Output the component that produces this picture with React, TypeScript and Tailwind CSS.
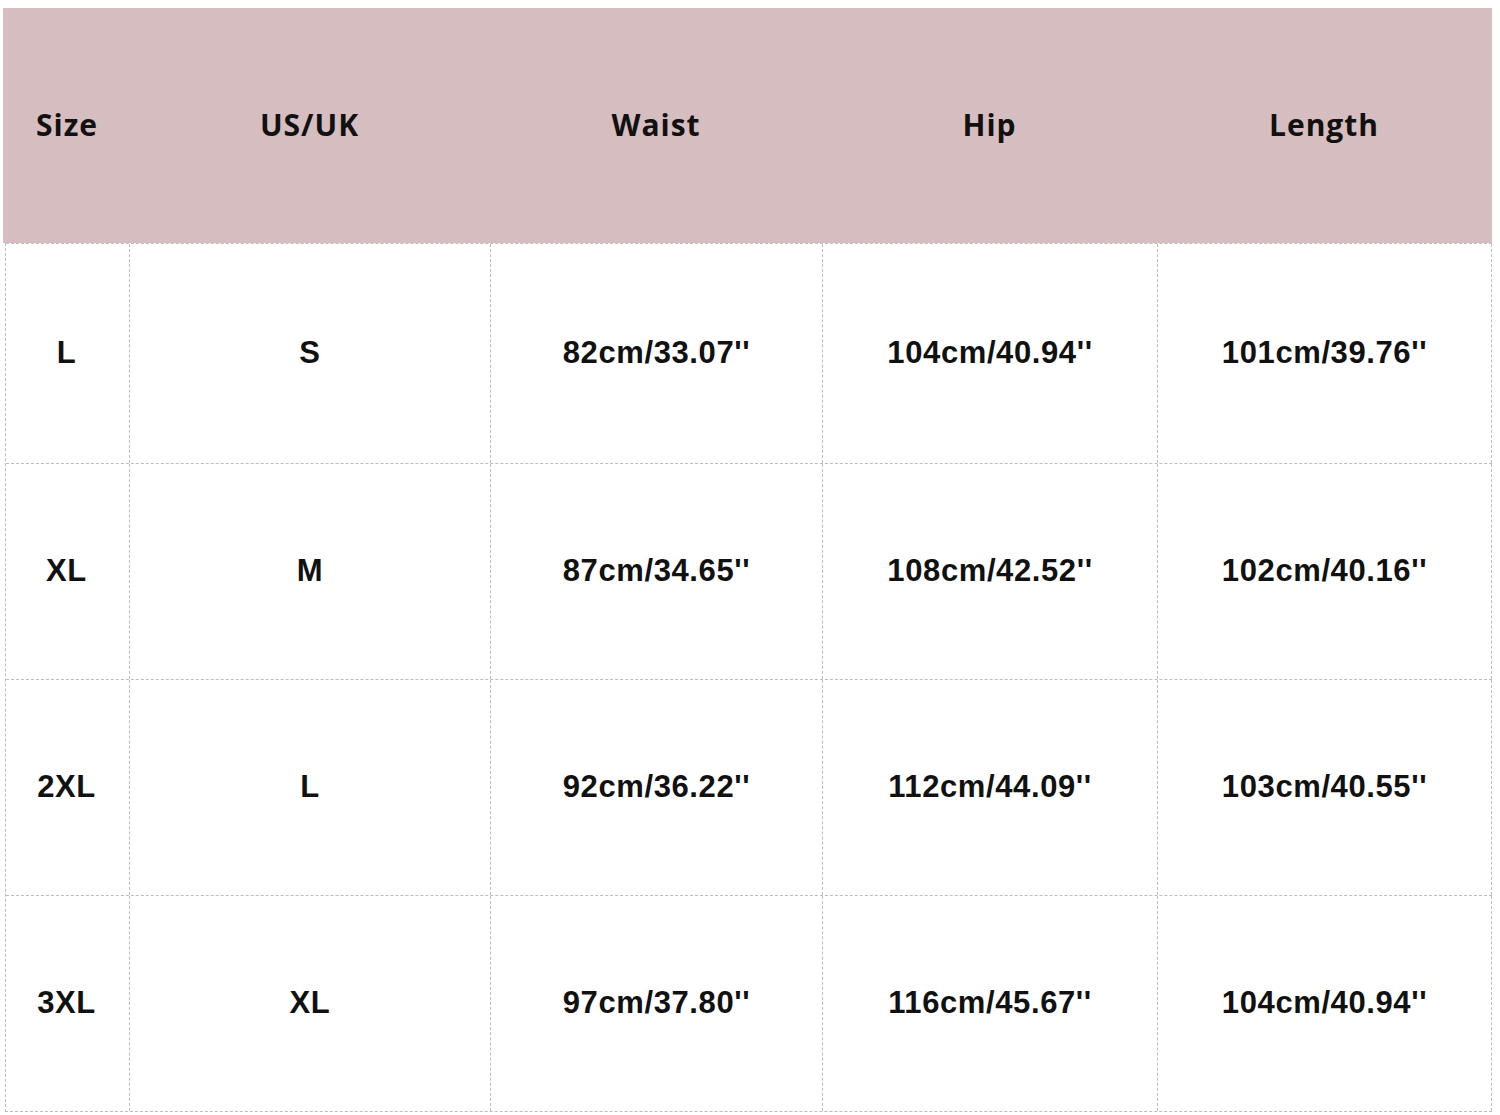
import React from "react";

const cols = "grid-cols-[124px_361px_332px_335px_334px]";
const header = ["Size", "US/UK", "Waist", "Hip", "Length"];
const rows = [
  ["L", "S", "82cm/33.07''", "104cm/40.94''", "101cm/39.76''"],
  ["XL", "M", "87cm/34.65''", "108cm/42.52''", "102cm/40.16''"],
  ["2XL", "L", "92cm/36.22''", "112cm/44.09''", "103cm/40.55''"],
  ["3XL", "XL", "97cm/37.80''", "116cm/45.67''", "104cm/40.94''"],
];
const heights = ["h-[220px]", "h-[216px]", "h-[216px]", "h-[216px]"];

export default function App() {
  return (
    <div className="w-[1500px] h-[1115px] bg-white overflow-hidden">
      <div className="pt-[8px] pl-[3px]">
        <div className={`grid ${cols} w-[1489px] h-[235px] bg-[#d6bdbf] pl-[2px]`}>
          {header.map((h) => (
            <div
              key={h}
              className="flex items-center justify-center pb-[3px] text-[30px] font-bold tracking-[1px] text-[#111] [font-family:'Open_Sans',sans-serif]"
            >
              {h}
            </div>
          ))}
        </div>
        <div className="ml-[2px] w-[1487px] border-l border-b border-dashed border-[#bdbdbd]">
          {rows.map((r, i) => (
            <div key={i} className={`grid ${cols} ${heights[i]} border-t border-dashed border-[#bdbdbd]`}>
              {r.map((c, j) => (
                <div
                  key={j}
                  className={`flex items-center justify-center border-r border-dashed border-[#bdbdbd] text-[31px] font-bold tracking-[0.6px] text-[#111] [font-family:'Liberation_Sans',Arial,sans-serif] ${j === 0 ? "pr-[2px]" : ""}`}
                >
                  {c}
                </div>
              ))}
            </div>
          ))}
        </div>
      </div>
    </div>
  );
}
